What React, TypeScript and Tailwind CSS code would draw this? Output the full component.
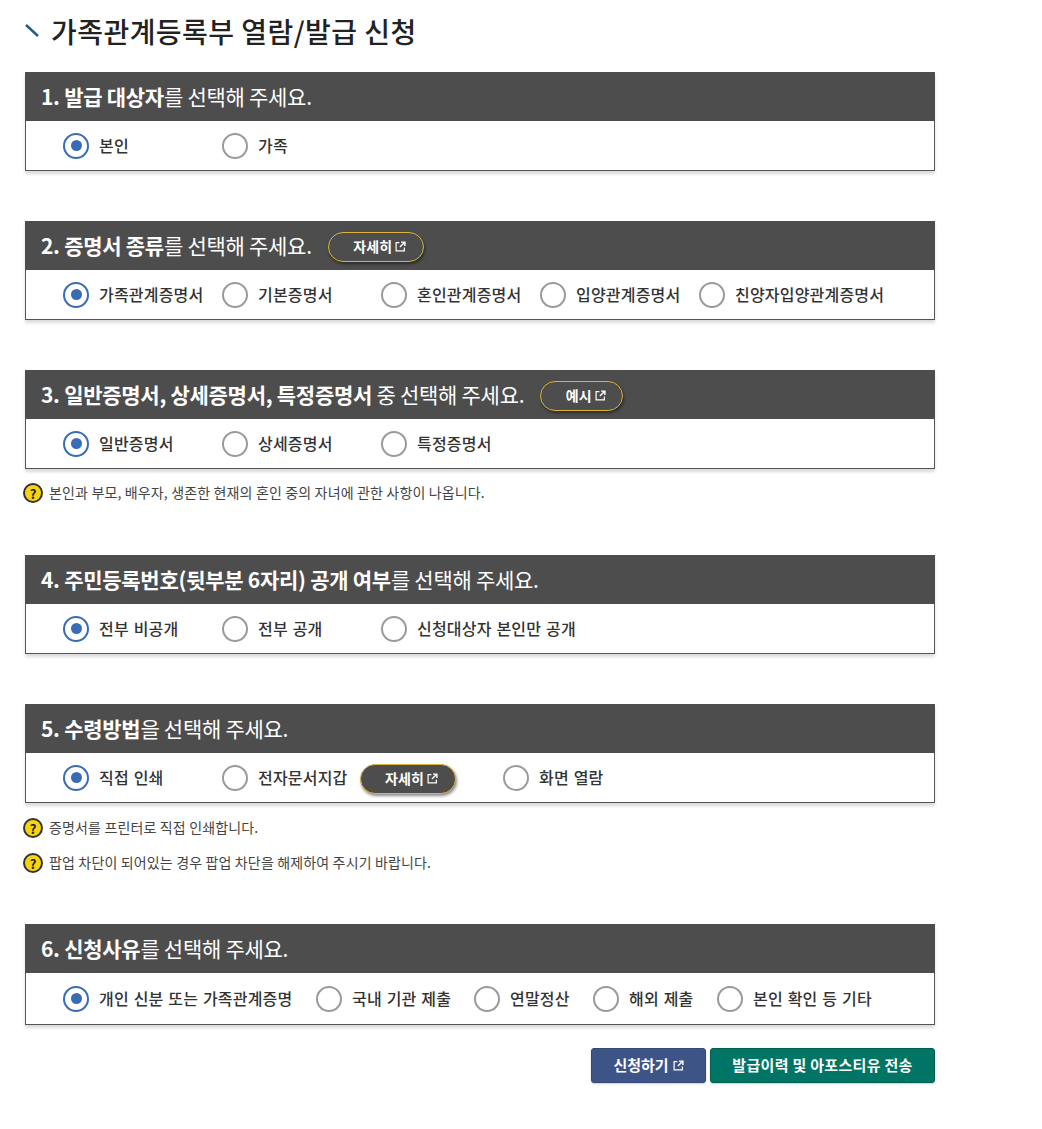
import { ReactNode } from "react";

const FONT = "font-['Noto_Sans_CJK_KR','Noto_Sans',sans-serif]";

function LinkIcon({ className }: { className?: string }) {
  return (
    <svg viewBox="0 0 10 10" className={className} fill="none" stroke="currentColor">
      <path d="M4 1.5H1V9h7.5V6" strokeWidth="1.1" />
      <path d="M5.5 1H9v3.5M9 1 4.5 5.5" strokeWidth="1.3" />
    </svg>
  );
}

function Radio({ label, checked, width, children }: { label: string; checked?: boolean; width: string; children?: ReactNode }) {
  return (
    <div className={`flex items-center shrink-0 ${width}`}>
      <span
        className={`flex items-center justify-center w-[26px] h-[26px] rounded-full border-2 bg-white shrink-0 ${
          checked ? "border-[#3a6cb5]" : "border-[#9a9a9a]"
        }`}
      >
        {checked && <span className="w-[11px] h-[11px] rounded-full bg-[#3a6cb5]" />}
      </span>
      <span className="ml-[10px] -mt-[2px] text-[16px] font-medium text-[#333] tracking-[0.2px] [word-spacing:1px] whitespace-nowrap">{label}</span>
      {children}
    </div>
  );
}

function OutlineButton({ label, width }: { label: string; width: string }) {
  return (
    <span
      className={`flex items-center justify-center gap-[3px] h-[30px] ${width} pl-[8px] mt-[2px] ml-[16px] rounded-full border border-[#d9b436] bg-[#4d4d4d] text-white text-[14px] font-bold tracking-[0.1px] shadow-[1px_2px_3px_rgba(0,0,0,0.45)]`}
    >
      {label}
      <LinkIcon className="w-[11px] h-[11px]" />
    </span>
  );
}

function Section({ title, action, bodyHeight = "h-[50px]", children }: { title: ReactNode; action?: ReactNode; bodyHeight?: string; children: ReactNode }) {
  return (
    <section className="shadow-[0_3px_3px_rgba(0,0,0,0.14)]">
      <div className="flex items-center h-[49px] pl-[16px] bg-[#4d4d4d] text-white text-[21px] tracking-[-0.27px]">
        <h3 className="font-normal whitespace-nowrap">{title}</h3>
        {action}
      </div>
      <div className={`flex items-center ${bodyHeight} pl-[37px] bg-white border border-t-0 border-[#555]`}>{children}</div>
    </section>
  );
}

function Note({ text }: { text: string }) {
  return (
    <p className="flex items-center h-[20px] text-[14px] text-[#444] tracking-[0.15px]">
      <span className="flex items-center justify-center w-[20px] h-[20px] -ml-[2px] mr-[6px] rounded-full border-2 border-[#333] bg-[#f8d30f] text-[13px] font-bold text-[#222] tracking-normal leading-none shrink-0">
        ?
      </span>
      <span className="-mt-[2px]">{text}</span>
    </p>
  );
}

export default function App() {
  return (
    <div className={`w-[1042px] h-[1129px] bg-white pl-[25px] pr-[107px] ${FONT}`}>
      <h2 className="flex items-center h-[72px] pb-[10px] text-[28px] font-medium text-[#222] tracking-[0.45px]">
        <svg viewBox="0 0 14 14" className="w-[14px] h-[14px] mr-[12px] text-[#1d5a8e]" stroke="currentColor" strokeWidth="2.4" fill="none">
          <path d="M1 1 13 12" />
        </svg>
        가족관계등록부 열람/발급 신청
      </h2>

      <Section title={<><b className="font-bold">1. 발급 대상자</b>를 선택해 주세요.</>}>
        <Radio label="본인" checked width="w-[159px]" />
        <Radio label="가족" width="w-[159px]" />
      </Section>

      <div className="mt-[50px]">
        <Section
          title={<><b className="font-bold">2. 증명서 종류</b>를 선택해 주세요.</>}
          action={<OutlineButton label="자세히" width="w-[96px]" />}
        >
          <Radio label="가족관계증명서" checked width="w-[159px]" />
          <Radio label="기본증명서" width="w-[159px]" />
          <Radio label="혼인관계증명서" width="w-[159px]" />
          <Radio label="입양관계증명서" width="w-[159px]" />
          <Radio label="친양자입양관계증명서" width="w-[159px]" />
        </Section>
      </div>

      <div className="mt-[50px]">
        <Section
          title={<><b className="font-bold">3. 일반증명서, 상세증명서, 특정증명서</b> 중 선택해 주세요.</>}
          action={<OutlineButton label="예시" width="w-[83px]" />}
        >
          <Radio label="일반증명서" checked width="w-[159px]" />
          <Radio label="상세증명서" width="w-[159px]" />
          <Radio label="특정증명서" width="w-[159px]" />
        </Section>
        <div className="mt-[14px]">
          <Note text="본인과 부모, 배우자, 생존한 현재의 혼인 중의 자녀에 관한 사항이 나옵니다." />
        </div>
      </div>

      <div className="mt-[52px]">
        <Section title={<><b className="font-bold">4. 주민등록번호(뒷부분 6자리) 공개 여부</b>를 선택해 주세요.</>}>
          <Radio label="전부 비공개" checked width="w-[159px]" />
          <Radio label="전부 공개" width="w-[159px]" />
          <Radio label="신청대상자 본인만 공개" width="w-[159px]" />
        </Section>
      </div>

      <div className="mt-[50px]">
        <Section title={<><b className="font-bold">5. 수령방법</b>을 선택해 주세요.</>}>
          <Radio label="직접 인쇄" checked width="w-[159px]" />
          <Radio label="전자문서지갑" width="w-[281px]">
            <OutlineButton label="자세히" width="w-[96px] !ml-[12px]" />
          </Radio>
          <Radio label="화면 열람" width="w-[159px]" />
        </Section>
        <div className="mt-[15px]">
          <Note text="증명서를 프린터로 직접 인쇄합니다." />
        </div>
        <div className="mt-[15px]">
          <Note text="팝업 차단이 되어있는 경우 팝업 차단을 해제하여 주시기 바랍니다." />
        </div>
      </div>

      <div className="mt-[51px]">
        <Section title={<><b className="font-bold">6. 신청사유</b>를 선택해 주세요.</>} bodyHeight="h-[52px]">
          <Radio label="개인 신분 또는 가족관계증명" checked width="w-[253px]" />
          <Radio label="국내 기관 제출" width="w-[158px]" />
          <Radio label="연말정산" width="w-[119px]" />
          <Radio label="해외 제출" width="w-[124px]" />
          <Radio label="본인 확인 등 기타" width="w-[159px]" />
        </Section>
      </div>

      <div className="flex justify-end gap-[4px] mt-[23px]">
        <button className="flex items-center justify-center gap-[4px] w-[115px] h-[35px] rounded-[3px] border border-[#34487a] bg-[#3d5487] text-white text-[15px] font-bold shadow-[0_1px_2px_rgba(0,0,0,0.2)]">
          신청하기
          <LinkIcon className="w-[11px] h-[11px]" />
        </button>
        <button className="w-[225px] h-[35px] rounded-[3px] border border-[#00604f] bg-[#007565] text-white text-[15px] font-bold tracking-[0.3px] shadow-[0_1px_2px_rgba(0,0,0,0.2)]">
          발급이력 및 아포스티유 전송
        </button>
      </div>
    </div>
  );
}
